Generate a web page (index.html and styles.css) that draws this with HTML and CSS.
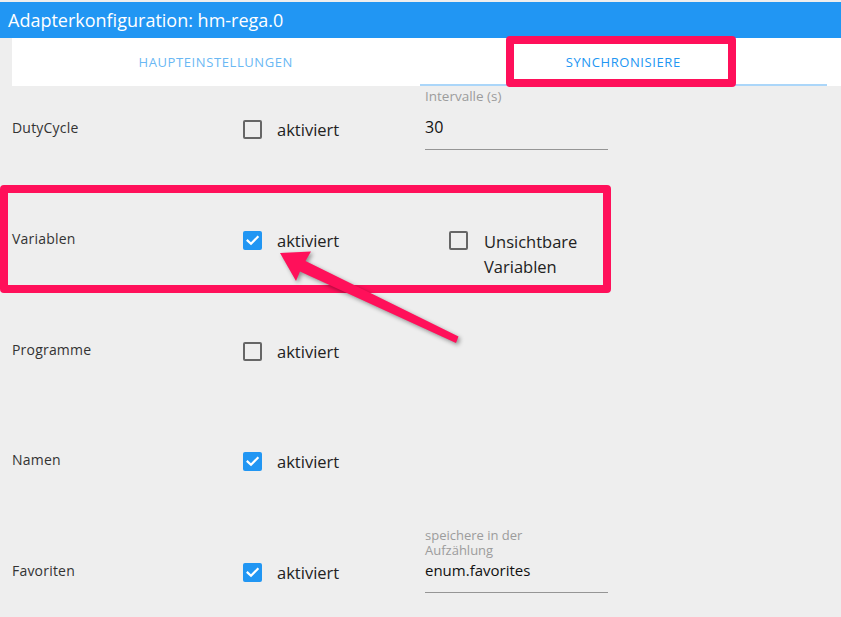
FILE: index.html
```html
<!DOCTYPE html>
<html lang="de">
<head>
<meta charset="utf-8">
<title>Adapterkonfiguration: hm-rega.0</title>
<link rel="stylesheet" href="styles.css">
</head>
<body>
<header class="titlebar">Adapterkonfiguration: hm-rega.0</header>
<nav class="tabs">
  <div class="tab">Haupteinstellungen</div>
  <div class="tab tab--active">Synchronisiere</div>
</nav>
<main class="settings">
  <div class="row">
    <div class="row-label">DutyCycle</div>
    <div class="check"><span class="box"></span><span class="check-text">aktiviert</span></div>
    <div class="field">
      <div class="field-label">Intervalle (s)</div>
      <div class="field-value">30</div>
    </div>
  </div>
  <div class="row">
    <div class="row-label">Variablen</div>
    <div class="check"><span class="box box--checked"><svg viewBox="0 0 19 19"><path d="M4.6 9.6 L8 12.8 L14.6 6" /></svg></span><span class="check-text">aktiviert</span></div>
    <div class="check check--third"><span class="box"></span><span class="check-text check-text--wrap">Unsichtbare Variablen</span></div>
  </div>
  <div class="row">
    <div class="row-label">Programme</div>
    <div class="check"><span class="box"></span><span class="check-text">aktiviert</span></div>
  </div>
  <div class="row">
    <div class="row-label">Namen</div>
    <div class="check"><span class="box box--checked"><svg viewBox="0 0 19 19"><path d="M4.6 9.6 L8 12.8 L14.6 6" /></svg></span><span class="check-text">aktiviert</span></div>
  </div>
  <div class="row">
    <div class="row-label">Favoriten</div>
    <div class="check"><span class="box box--checked"><svg viewBox="0 0 19 19"><path d="M4.6 9.6 L8 12.8 L14.6 6" /></svg></span><span class="check-text">aktiviert</span></div>
    <div class="field field--multiline">
      <div class="field-label">speichere in der Aufzählung</div>
      <div class="field-value">enum.favorites</div>
    </div>
  </div>
</main>
<div class="annot annot--tab"></div>
<div class="annot annot--row"></div>
<svg class="arrow" width="841" height="617" viewBox="0 0 841 617">
  <polygon points="280,253 311,251.5 305.5,261 458.5,336.5 456,343 300,271.5 296,281" />
</svg>
</body>
</html>
```
FILE: styles.css
```css
html, body {
  margin: 0;
  padding: 0;
}
body {
  background: #eeeeee;
  font-family: "Open Sans", "Noto Sans", sans-serif;
  width: 841px;
  height: 617px;
  overflow: hidden;
  position: relative;
}
.titlebar {
  margin-top: 2px;
  height: 36px;
  background: #2196f3;
  color: #ffffff;
  font-size: 18px;
  line-height: 36px;
  padding-left: 8px;
  white-space: nowrap;
}
.tabs {
  display: flex;
  margin-left: 12px;
  height: 48px;
  background: #ffffff;
  padding-right: 14px;
}
.tab {
  flex: 0 0 407.5px;
  display: flex;
  align-items: center;
  justify-content: center;
  text-transform: uppercase;
  font-size: 13px;
  letter-spacing: 0.6px;
  color: #6ab8f4;
  box-sizing: border-box;
  padding-top: 0;
}
.tab--active {
  color: #2196f3;
  border-bottom: 2px solid #abd6f9;
  padding-top: 2px;
}
.settings {
  padding-left: 12px;
}
.row {
  display: grid;
  grid-template-columns: 230px 183px 188px;
  height: 110.75px;
  align-items: start;
}
.row-label {
  padding-top: 32px;
  font-size: 14px;
  line-height: 20px;
  color: #333333;
  letter-spacing: 0.2px;
}
.check {
  padding-top: 32px;
  display: flex;
  align-items: flex-start;
}
.check--third {
  padding-left: 23px;
}
.box {
  flex: 0 0 auto;
  width: 19px;
  height: 19px;
  margin-top: 2px;
  margin-left: 1px;
  box-sizing: border-box;
  border: 2px solid #666666;
  border-radius: 2px;
  display: block;
}
.box--checked {
  border: none;
  background: #2196f3;
}
.box svg {
  display: block;
  width: 19px;
  height: 19px;
}
.box svg path {
  fill: none;
  stroke: #ffffff;
  stroke-width: 2.2;
  stroke-linecap: square;
}
.check-text {
  margin-left: 15px;
  font-size: 16.5px;
  line-height: 24px;
  color: #222222;
}
.check-text--wrap {
  margin-left: 16px;
  line-height: 25px;
  letter-spacing: 0;
}
.field {
  padding-top: 2px;
  width: 183px;
}
.field-label {
  font-size: 13.5px;
  line-height: 16px;
  color: #9c9c9c;
}
.field-value {
  margin-top: 11px;
  font-size: 16px;
  line-height: 24px;
  color: #111111;
  padding-bottom: 10px;
  border-bottom: 1px solid #959595;
}
.field--multiline {
  padding-top: 0;
}
.field--multiline .field-label {
  margin-top: -1px;
  font-size: 13px;
  line-height: 15px;
  padding-right: 60px;
}
.field--multiline .field-value {
  margin-top: 3.6px;
  font-size: 15px;
  line-height: 16px;
  padding-bottom: 14.4px;
}
.annot {
  position: absolute;
  border: 8px solid #ff105a;
  border-radius: 4px;
  box-sizing: border-box;
}
.annot--tab {
  left: 506px;
  top: 36px;
  width: 230px;
  height: 51px;
}
.annot--row {
  left: 0;
  top: 185px;
  width: 611px;
  height: 108px;
}
.arrow {
  position: absolute;
  left: 0;
  top: 0;
  pointer-events: none;
}
.arrow polygon {
  fill: #ff105a;
  filter: drop-shadow(2px 2px 2px rgba(0, 0, 0, 0.4));
}
```
